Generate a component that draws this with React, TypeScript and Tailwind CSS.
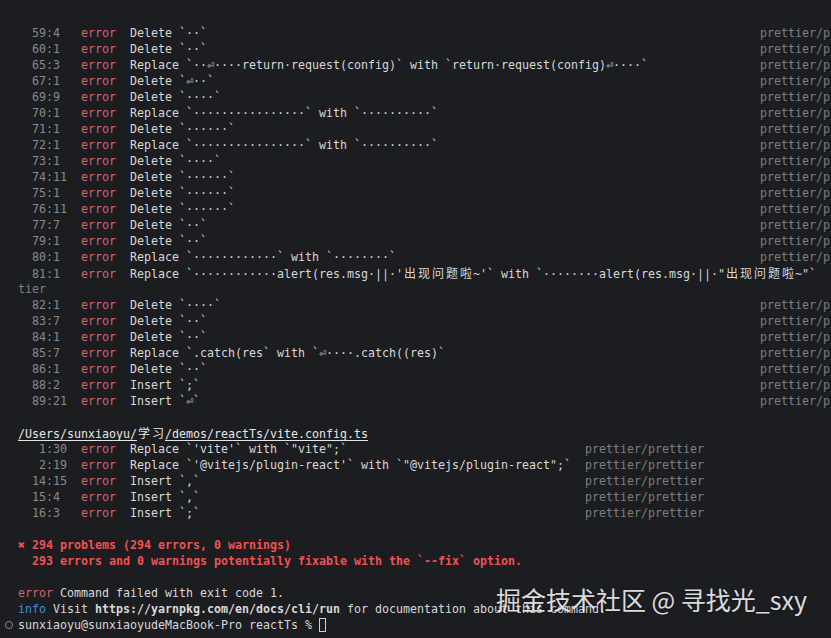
import React from "react"

const CJK = /[\u3000-\u9fff\uff00-\uffef]/

// monospace text; CJK glyphs take two cells like in the terminal
function T({ text, className = "" }: { text: string; className?: string }) {
  const parts: React.ReactNode[] = []
  let buf = ""
  Array.from(text).forEach((ch, i) => {
    if (CJK.test(ch)) {
      if (buf) parts.push(buf)
      buf = ""
      parts.push(
        <span
          key={i}
          className="inline-block w-[14px] text-center text-[12px] leading-4 [font-family:'Noto_Sans_CJK_SC',sans-serif]"
        >
          {ch}
        </span>
      )
    } else {
      buf += ch
    }
  })
  if (buf) parts.push(buf)
  return <span className={className}>{parts}</span>
}

const top: [string, string][] = [
  ["59:4", "Delete `··`"],
  ["60:1", "Delete `··`"],
  ["65:3", "Replace `··⏎····return·request(config)` with `return·request(config)⏎····`"],
  ["67:1", "Delete `⏎··`"],
  ["69:9", "Delete `····`"],
  ["70:1", "Replace `················` with `··········`"],
  ["71:1", "Delete `······`"],
  ["72:1", "Replace `················` with `··········`"],
  ["73:1", "Delete `····`"],
  ["74:11", "Delete `······`"],
  ["75:1", "Delete `······`"],
  ["76:11", "Delete `······`"],
  ["77:7", "Delete `··`"],
  ["79:1", "Delete `··`"],
  ["80:1", "Replace `············` with `········`"],
  ["81:1", "Replace `············alert(res.msg·||·'出现问题啦~'` with `········alert(res.msg·||·\"出现问题啦~\"`"],
  ["82:1", "Delete `····`"],
  ["83:7", "Delete `··`"],
  ["84:1", "Delete `··`"],
  ["85:7", "Replace `.catch(res` with `⏎····.catch((res)`"],
  ["86:1", "Delete `··`"],
  ["88:2", "Insert `;`"],
  ["89:21", "Insert `⏎`"],
]

const bottom: [string, string][] = [
  ["1:30", "Replace `'vite'` with `\"vite\";`"],
  ["2:19", "Replace `'@vitejs/plugin-react'` with `\"@vitejs/plugin-react\";`"],
  ["14:15", "Insert `,`"],
  ["15:4", "Insert `,`"],
  ["16:3", "Insert `;`"],
]

function Row({ pos, msg, width, rule = true }: { pos: string; msg: string; width: number; rule?: boolean }) {
  const [l, c] = pos.split(":")
  return (
    <div className="h-4 leading-4 whitespace-pre">
      <span className="text-[#8a8a8a]">{"  " + l.padStart(2) + ":" + c.padEnd(2)}</span>
      {"  "}
      <span className="text-[#d3656e]">error</span>
      {"  "}
      <T text={msg} className="text-[#d8d8d8]" />
      {rule && (
        <>
          {" ".repeat(width - msg.length + 2)}
          <span className="text-[#7d7d7d]">prettier/prettier</span>
        </>
      )}
    </div>
  )
}

export default function App() {
  return (
    <div className="relative w-[831px] h-[638px] overflow-hidden bg-[#1c1d20] text-[#d8d8d8] text-[11.63px] [font-family:'DejaVu_Sans_Mono',monospace]">
      <div className="pl-[18px] pt-[25px]">
        {top.map(([p, m]) => (
          <React.Fragment key={p}>
            <Row pos={p} msg={m} width={88} rule={p !== "81:1"} />
            {p === "81:1" && <div className="h-4 leading-4 text-[#7d7d7d]">tier</div>}
          </React.Fragment>
        ))}
        <div className="h-4" />
        <div className="h-4 leading-4 whitespace-pre">
          <T text="/Users/sunxiaoyu/学习/demos/reactTs/vite.config.ts" className="underline underline-offset-2 text-[#e6e6e6]" />
        </div>
        {bottom.map(([p, m]) => (
          <Row key={p} pos={p} msg={m} width={63} />
        ))}
        <div className="h-4" />
        <div className="h-4 leading-4 whitespace-pre font-bold text-[#ee5253]">✖ 294 problems (294 errors, 0 warnings)</div>
        <div className="h-4 leading-4 whitespace-pre font-bold text-[#ee5253]">
          {"  293 errors and 0 warnings potentially fixable with the `--fix` option."}
        </div>
        <div className="h-4" />
        <div className="h-4 leading-4 whitespace-pre">
          <span className="text-[#d3656e]">error</span> Command failed with exit code 1.
        </div>
        <div className="h-4 leading-4 whitespace-pre">
          <span className="text-[#3f8fd6]">info</span> Visit <span className="font-bold">https://yarnpkg.com/en/docs/cli/run</span> for documentation about this command.
        </div>
        <div className="h-4 leading-4 whitespace-pre flex items-center -ml-[13px]">
          <span className="w-[8px] h-[8px] rounded-full border border-[#8a8a8a] mr-[5px]" />
          <span>sunxiaoyu@sunxiaoyudeMacBook-Pro reactTs % </span>
          <span className="w-[7px] h-[14px] border border-[#d0d0d0]" />
        </div>
      </div>
      <div className="absolute left-[496px] top-[583px] text-[25px] leading-[32px] text-white/85 whitespace-pre [text-shadow:0_0_2px_rgba(0,0,0,0.5)] [font-family:'Noto_Sans_CJK_SC',sans-serif]">
        掘金技术社区 @ 寻找光_sxy
      </div>
    </div>
  )
}
